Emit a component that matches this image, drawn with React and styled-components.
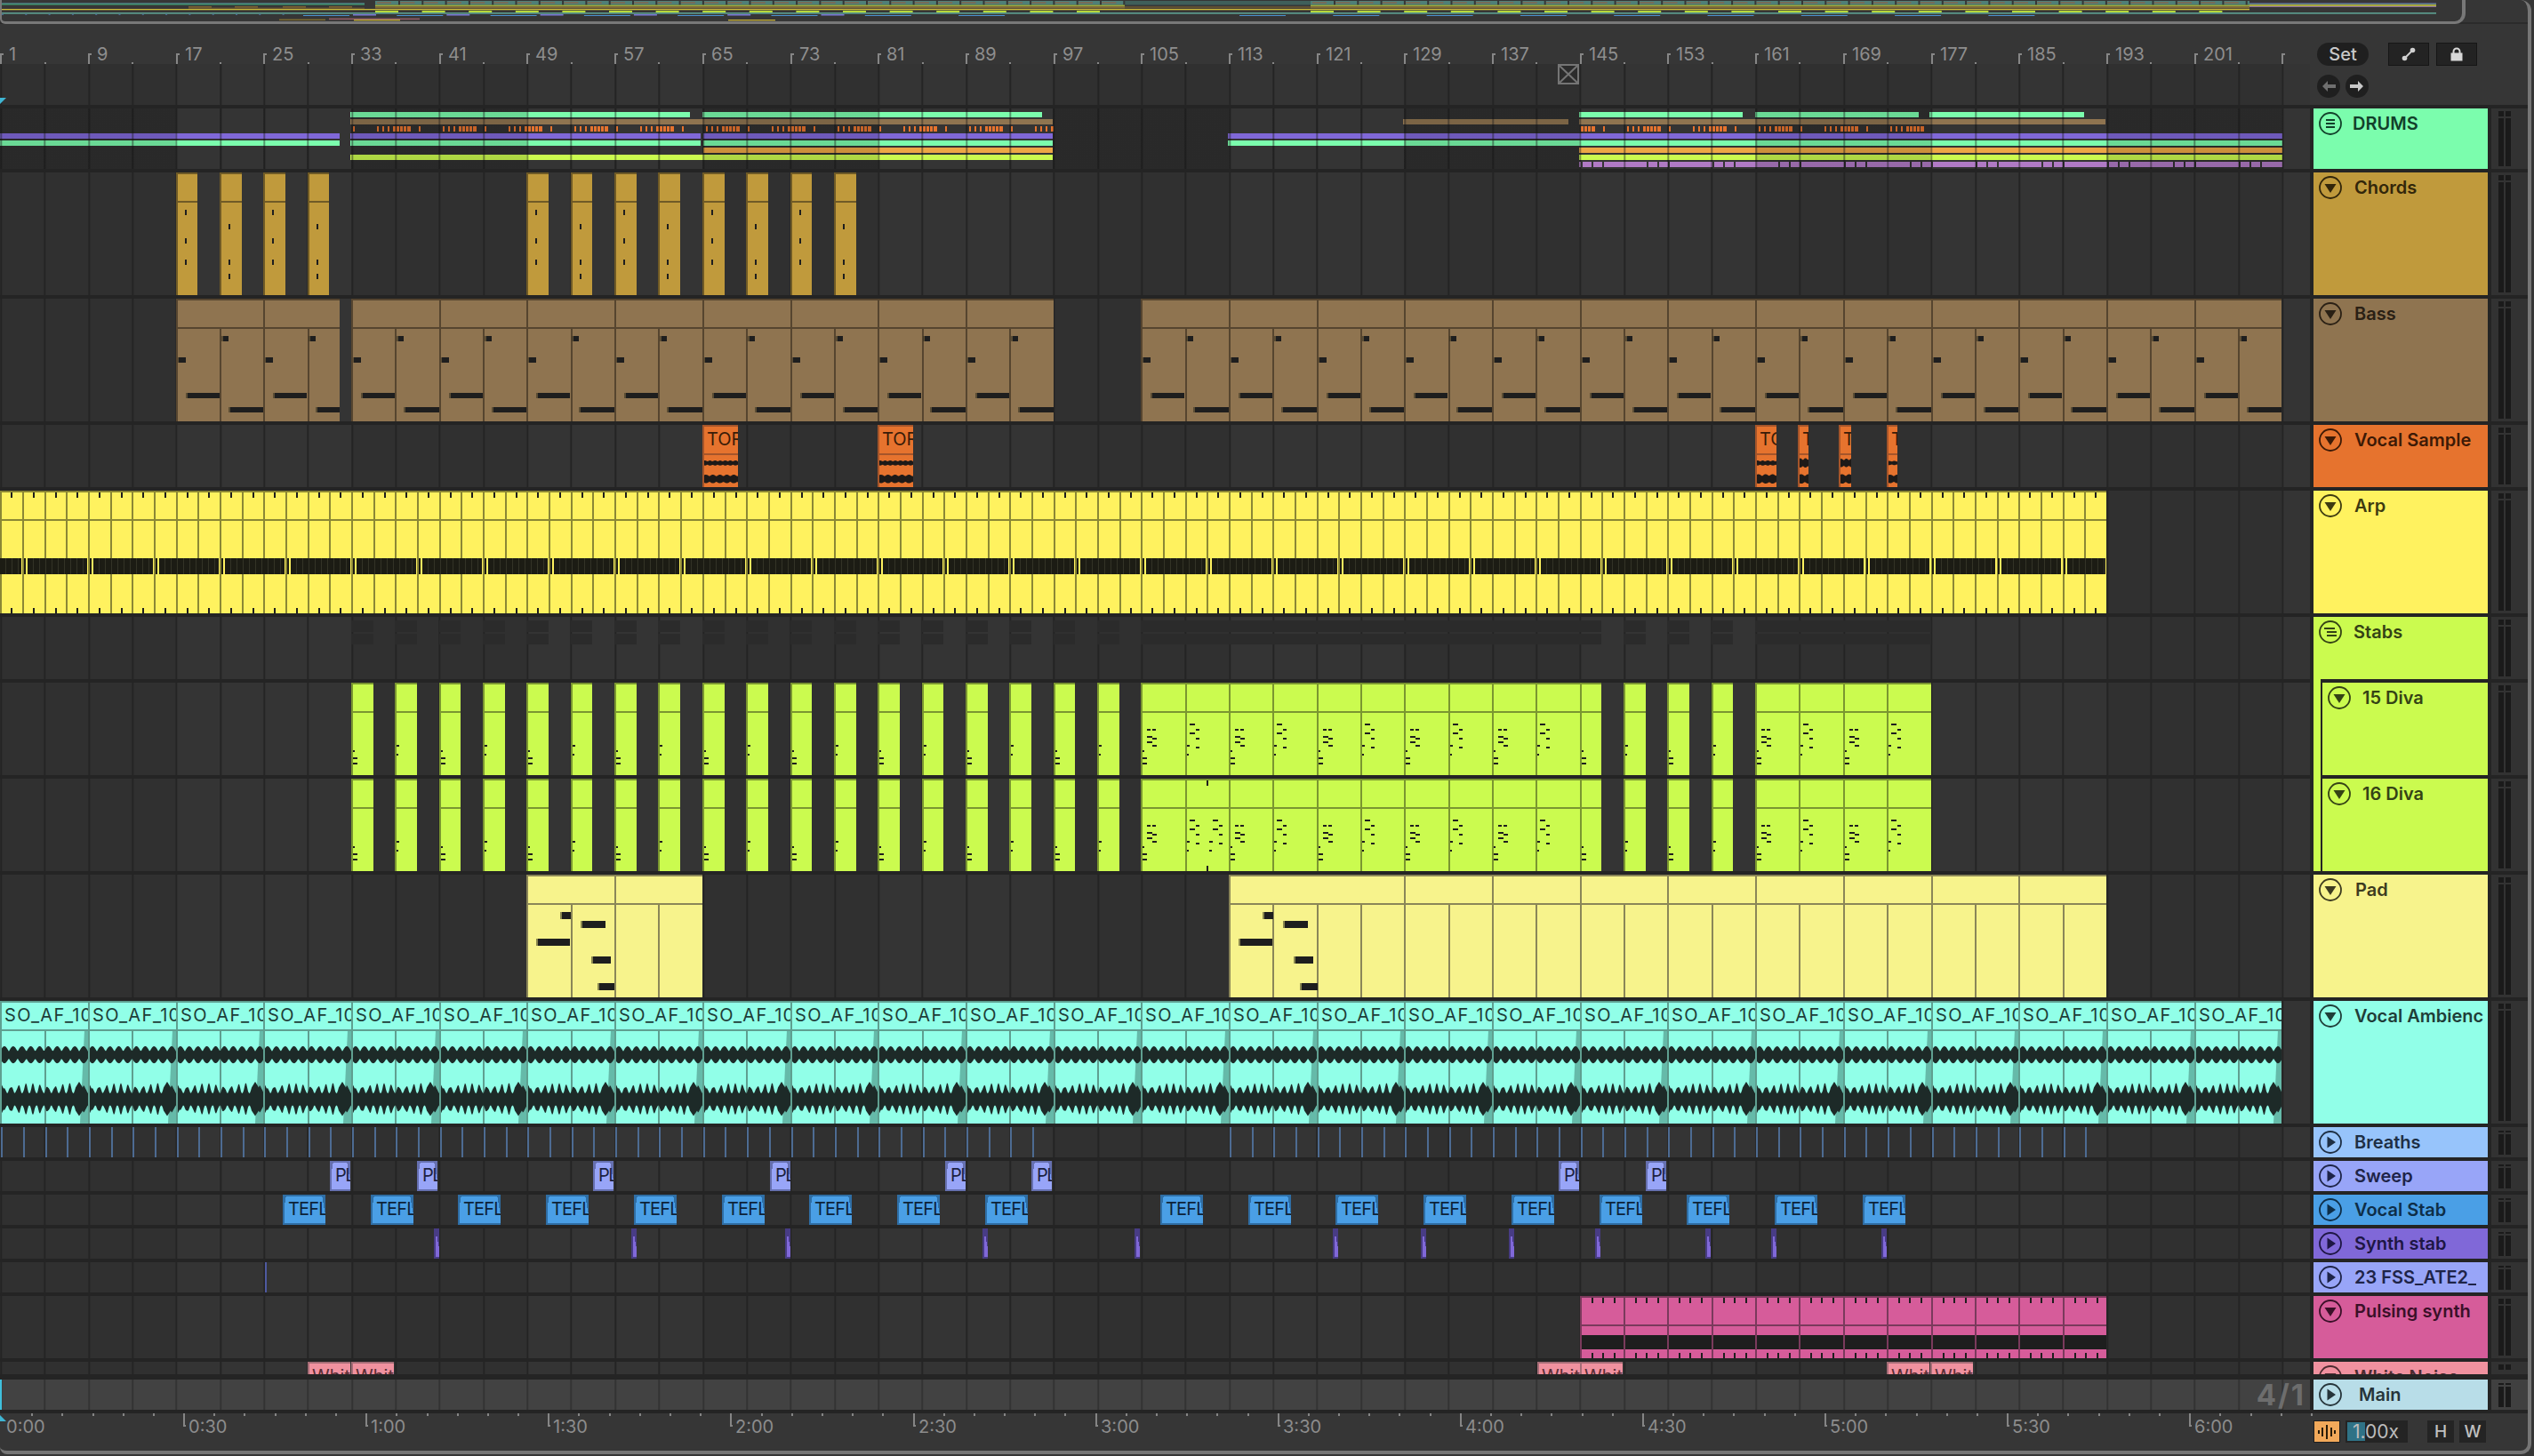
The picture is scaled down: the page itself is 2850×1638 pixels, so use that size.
import React from 'react';
import styled, { createGlobalStyle } from 'styled-components';

const STEP = 49.346;
const g = (i) => Math.round(0.3 + STEP * i);
const range = (from, to, by = 1) => {
  const out = [];
  for (let v = from; v < to - 0.001; v += by) out.push(v);
  return out;
};

const GlobalStyle = createGlobalStyle`
  html, body { margin: 0; padding: 0; background: #363636; overflow: hidden; }
  #root { width: 2850px; height: 1638px; overflow: hidden; }
  * { box-sizing: border-box; }
`;

const Frame = styled.div`
  width: 2847px;
  height: 1636px;
  display: flex;
  flex-direction: column;
  background: #363636;
  border-right: 4px solid #767676;
  border-bottom: 4px solid #767676;
  border-bottom-right-radius: 12px;
  border-bottom-left-radius: 8px;
  border-top-right-radius: 12px;
  font-family: Inter, 'Liberation Sans', sans-serif;
  overflow: hidden;
`;

/* overview */
const OverviewBar = styled.div`
  height: 27px;
  flex: none;
  border-bottom: 2px solid #2b2b2b;
`;
const OverviewBox = styled.div`
  width: 2773px;
  height: 27px;
  border: solid #787878;
  border-width: 0 4px 3px 2px;
  border-radius: 0 0 12px 6px;
  overflow: hidden;
`;

/* top */
const TopRow = styled.div`
  display: flex;
  height: 91px;
  flex: none;
`;
const TopLeft = styled.div`
  width: 2598px;
  flex: none;
  display: flex;
  flex-direction: column;
`;
const Ruler = styled.div`
  height: 45px;
  position: relative;
  flex: none;
`;
const BarTick = styled.div.attrs((p) => ({ style: { left: p.$x } }))`
  position: absolute;
  top: ${(p) => (p.$long ? 33 : 43)}px;
  height: ${(p) => (p.$long ? 12 : 2)}px;
  width: 2px;
  background: #868686;
  &::after {
    content: '';
    display: ${(p) => (p.$long ? 'block' : 'none')};
    width: 4px;
    height: 2px;
    background: #868686;
  }
`;
const BarLabel = styled.span.attrs((p) => ({ style: { left: p.$x } }))`
  position: absolute;
  top: 22px;
  font-size: 20px;
  line-height: 24px;
  color: #8e8e8e;
`;
const Controls = styled.div`
  flex: 1;
  padding: 21px 0 0 8px;
  display: flex;
  flex-direction: column;
  gap: 10px;
`;
const ControlRow = styled.div`
  display: flex;
  gap: ${(p) => p.$gap}px;
`;
const SetPill = styled.div`
  width: 58px;
  height: 26px;
  border-radius: 13px;
  background: #1f1f1f;
  color: #c8c8c8;
  font-size: 20px;
  font-weight: 500;
  line-height: 26px;
  text-align: center;
  margin-right: 14px;
`;
const SquareBtn = styled.div`
  width: 46px;
  height: 26px;
  background: #232323;
  border: 1px solid #161616;
  display: flex;
  align-items: center;
  justify-content: center;
`;
const RoundBtn = styled.div`
  width: 26px;
  height: 26px;
  border-radius: 50%;
  background: #1f1f1f;
  display: flex;
  align-items: center;
  justify-content: center;
`;

/* tracks */
const TrackList = styled.div`
  background: #242424;
  padding: 4px 0;
  display: flex;
  flex-direction: column;
  gap: 4px;
  flex: none;
`;
const TrackRow = styled.div`
  display: grid;
  grid-template-columns: 2598px 196px 41px;
  column-gap: 4px;
  height: ${(p) => p.$h}px;
  margin-top: ${(p) => p.$mt || 0}px;
`;
const gridLines = (line) => `repeating-linear-gradient(90deg, ${line} 0 2px, transparent 2px ${STEP}px)`;
const Lane = styled.div`
  position: relative;
  overflow: hidden;
  flex: ${(p) => (p.$fill ? 1 : 'none')};
  background-color: #343434;
  background-image: ${(p) =>
    p.$main
      ? `${gridLines('#333333')}, linear-gradient(#424242, #424242)`
      : `${gridLines('#242424')}, repeating-linear-gradient(90deg, #303030 0 ${STEP * 4}px, #343434 ${STEP * 4}px ${STEP * 8}px)`};
  background-position: 0.3px 0, 0 0;
  ${(p) =>
    p.$summary &&
    `
    &::after {
      content: '';
      position: absolute;
      inset: 0;
      pointer-events: none;
      background-image: ${gridLines('rgba(30,30,30,.45)')}, repeating-linear-gradient(90deg, rgba(0,0,0,.14) 0 ${STEP * 4}px, transparent ${STEP * 4}px ${STEP * 8}px);
      background-position: 0.3px 0, 0 0;
    }
  `}
`;
const Panel = styled.div`
  position: relative;
  display: flex;
  align-items: flex-start;
  background: ${(p) => p.$color};
  color: ${(p) => p.$ink};
  padding: 4px 0 0 6px;
  overflow: ${(p) => (p.$nested ? 'visible' : 'hidden')};
  ${(p) =>
    p.$nested &&
    `
    margin-left: 8px;
    border-left: 2px solid #242424;
    &::before {
      content: '';
      position: absolute;
      left: -10px;
      top: -4px;
      bottom: 0;
      width: 8px;
      background: ${p.$color};
    }
  `}
`;
const IconSvg = styled.svg`
  width: 26px;
  height: 26px;
  flex: none;
`;
const PanelLabel = styled.span`
  margin-left: ${(p) => p.$ml}px;
  font-size: 20px;
  font-weight: 600;
  line-height: 26px;
  white-space: nowrap;
  overflow: hidden;
`;
const Meter = styled.div`
  background: ${(p) => (p.$main ? '#404040' : '#323232')};
  padding: ${(p) => (p.$small ? 4 : 3)}px 0 3px 8px;
  display: flex;
  gap: 2px;
  overflow: hidden;
`;
const MeterBar = styled.div`
  width: 6px;
  height: 100%;
  display: flex;
  flex-direction: column;
  gap: 2px;
  &::before {
    content: '';
    height: ${(p) => (p.$small ? 2 : 6)}px;
    flex: none;
    background: #1a1a1a;
  }
  &::after {
    content: '';
    flex: 1;
    background: #1a1a1a;
  }
`;

/* clips */
const Clip = styled.div.attrs((p) => ({ style: { left: p.$x, width: p.$w } }))`
  position: absolute;
  top: 0;
  bottom: 0;
  overflow: hidden;
  background: ${(p) => p.$color};
  &::after {
    content: '';
    position: absolute;
    left: 0;
    top: 0;
    bottom: 0;
    width: 2px;
    background: ${(p) => p.$edge};
  }
`;
const ClipHead = styled.div`
  height: 34px;
  border-top: 2px solid ${(p) => p.$edge};
  border-bottom: 2px solid ${(p) => p.$edge};
  padding-left: ${(p) => p.$pad || 5}px;
  font-size: 20px;
  line-height: 29px;
  letter-spacing: ${(p) => p.$track || 0}px;
  white-space: nowrap;
  color: ${(p) => p.$ink || '#1c1c1c'};
`;
const FadedClip = styled(Clip)`
  background-image:
    linear-gradient(100deg, ${(p) => p.$edge} 4px, transparent 4px),
    linear-gradient(260deg, ${(p) => p.$edge} 4px, transparent 4px);
`;
const BodyLine = styled.div.attrs((p) => ({ style: { left: p.$x } }))`
  position: absolute;
  top: 34px;
  bottom: 0;
  width: 2px;
  background: ${(p) => p.$color};
`;
const Note = styled.div.attrs((p) => ({
  style: { left: p.$x, top: p.$y, width: p.$w, height: p.$h },
}))`
  position: absolute;
  background: #1e1e1e;
`;
const EdgedNote = styled(Note)`
  border-left: 2px solid rgba(50, 45, 30, 0.55);
  background-clip: padding-box;
`;
const Strip = styled.div.attrs((p) => ({
  style: { left: p.$x, top: p.$y, width: p.$w, height: p.$h || 6 },
}))`
  position: absolute;
  background: ${(p) => p.$color};
`;
const ArpBar = styled(Strip)`
  background-image: repeating-linear-gradient(90deg, transparent 0 6px, rgba(255, 255, 200, 0.1) 6px 7px);
`;
const FadeEnd = styled.div`
  position: absolute;
  top: 34px;
  bottom: 0;
  right: 0;
  width: 9px;
  background: rgba(40, 90, 80, 0.42);
  clip-path: polygon(55% 0, 100% 0, 100% 100%, 0 100%);
`;
const WaveSvg = styled.svg`
  position: absolute;
  left: 0;
  top: 0;
  pointer-events: none;
`;
const Marker = styled.div`
  position: absolute;
  left: 0;
  top: ${(p) => p.$top}px;
  width: 0;
  height: 7px;
  ${(p) =>
    p.$down
      ? 'border-top: 7px solid #3fb6d4; border-right: 7px solid transparent;'
      : 'border-bottom: 7px solid #3fb6d4; border-right: 7px solid transparent;'}
`;
const PlayBar = styled.div`
  position: absolute;
  left: 0;
  top: 0;
  bottom: 0;
  width: 2px;
  background: #3fc0dc;
`;
const Signature = styled.span`
  position: absolute;
  right: 5px;
  top: 0;
  font-size: 33px;
  font-weight: 700;
  letter-spacing: 2px;
  line-height: 34px;
  color: #6d6d6d;
`;
const LocatorBox = styled.svg`
  position: absolute;
  left: 1752px;
  top: 0;
`;

/* bottom */
const BottomRow = styled.div`
  display: flex;
  height: 42px;
  flex: none;
`;
const Timeline = styled.div`
  width: 2602px;
  flex: none;
  position: relative;
`;
const TimeTick = styled.div.attrs((p) => ({ style: { left: p.$x } }))`
  position: absolute;
  top: 0;
  width: 2px;
  height: ${(p) => (p.$major ? 15 : 3)}px;
  background: #858585;
  &::after {
    content: '';
    display: ${(p) => (p.$major ? 'block' : 'none')};
    position: absolute;
    left: 0;
    bottom: 0;
    width: 3px;
    height: 2px;
    background: #858585;
  }
`;
const TimeLabel = styled.span.attrs((p) => ({ style: { left: p.$x } }))`
  position: absolute;
  top: 3px;
  font-size: 20px;
  line-height: 24px;
  color: #8c8c8c;
`;
const Footer = styled.div`
  flex: 1;
  display: flex;
  align-items: flex-start;
  padding-top: 8px;
`;
const OrangeBtn = styled.div`
  width: 30px;
  height: 25px;
  background: #f2a95a;
  border: 1px solid #1e1e1e;
  display: flex;
  align-items: center;
  justify-content: center;
  margin-right: 6px;
`;
const SpeedBox = styled.div`
  position: relative;
  width: 70px;
  height: 25px;
  background: #242424;
  color: #bcbcbc;
  font-size: 21px;
  line-height: 25px;
  padding-left: 8px;
  margin-right: 22px;
  overflow: hidden;
  &::before {
    content: '';
    position: absolute;
    left: 2px;
    top: 2px;
    bottom: 2px;
    width: 20px;
    background: #2f7286;
  }
`;
const SpeedText = styled.span`
  position: relative;
`;
const KeyBtn = styled.div`
  width: 30px;
  height: 25px;
  background: #242424;
  color: #c0c0c0;
  font-size: 19px;
  font-weight: 500;
  line-height: 25px;
  text-align: center;
  margin-right: 6px;
`;

/* drawings */
function TrackIcon({ kind }) {
  return (
    <IconSvg viewBox="0 0 26 26" fill="currentColor">
      <circle cx="13" cy="13" r="12" fill="none" stroke="currentColor" strokeWidth="1.8" />
      {kind === 'down' && <polygon points="6.5,9 19.5,9 13,19" />}
      {kind === 'right' && <polygon points="9.5,6.5 9.5,19.5 19,13" />}
      {kind === 'group' && (
        <g stroke="currentColor" strokeWidth="2">
          <line x1="8" x2="18" y1="9" y2="9" />
          <line x1="8" x2="18" y1="13" y2="13" />
          <line x1="8" x2="18" y1="17" y2="17" />
        </g>
      )}
      {kind === 'stagger' && (
        <g stroke="currentColor" strokeWidth="2">
          <line x1="6" x2="18" y1="9" y2="9" />
          <line x1="9" x2="20" y1="13" y2="13" />
          <line x1="9" x2="20" y1="17" y2="17" />
        </g>
      )}
    </IconSvg>
  );
}

function envelopePath(w, cy, env) {
  const up = [];
  const down = [];
  for (let t = 0; t <= w; t += 1) {
    const a = env(t);
    up.push(`${t},${(cy - a).toFixed(1)}`);
    down.unshift(`${t},${(cy + a * 0.92).toFixed(1)}`);
  }
  return `M${up.join('L')}L${down.join('L')}Z`;
}

const AMBIENT_W = 99;
const ambientPath =
  envelopePath(AMBIENT_W, 61, (t) => 4 + 6 * Math.abs(Math.sin((Math.PI * t * 10) / AMBIENT_W))) +
  envelopePath(AMBIENT_W, 111, (t) => {
    const wob = Math.abs(Math.sin((Math.PI * t * 12) / AMBIENT_W));
    const base = 7 + 12 * wob * wob * (0.78 + 0.22 * Math.sin(t * 0.9));
    if (t < 5) return 21 - t * 2.2;
    if (t > 84 && t < 94) return 20 - Math.abs(t - 89) * 1.6;
    return base;
  });

function AmbientWave() {
  return (
    <WaveSvg width={AMBIENT_W} height="138">
      <path d={ambientPath} fill="#1d2a28" />
    </WaveSvg>
  );
}

function SampleWave({ w, top, bottom }) {
  const d =
    envelopePath(w, 43, (t) => top * (0.6 + 0.4 * Math.abs(Math.sin(t * 0.55)))) +
    envelopePath(w, 61, (t) => bottom * (0.62 + 0.38 * Math.abs(Math.sin(t * 0.4))));
  return (
    <WaveSvg width={w} height="70">
      <path d={d} fill="#1e1a18" />
    </WaveSvg>
  );
}

const c = {
  chords: ['#c09a3c', '#6f5a26'],
  bass: ['#8f7450', '#56452f'],
  vocal: ['#e6732e', '#a5552a'],
  arp: ['#fff25f', '#8b8735'],
  diva: ['#cbfb4f', '#7a9630'],
  pad: ['#f7f38c', '#8a8658'],
  amb: ['#91ffe8', '#5f9f90'],
  sweep: ['#98a5f8', '#6670b0'],
  stab: ['#4a9fe6', '#2f6ea5'],
  synth: ['#8068d8', '#483c85'],
  pulse: ['#d65c9a', '#7a3a5c'],
  white: ['#f0919f', '#a56d77'],
};

/* lanes */
function MidiClip({ from, to, color, beats, children, name, ink, track }) {
  const x = g(from);
  const w = g(to) - x;
  return (
    <Clip $x={x} $w={w} $color={color[0]} $edge={color[1]}>
      <ClipHead $edge={color[1]} $ink={ink} $track={track}>
        {name}
      </ClipHead>
      {(beats || []).map((b) => (
        <BodyLine key={b} $x={g(from + b) - x} $color={color[1]} />
      ))}
      {children}
    </Clip>
  );
}

const STRIP_ROWS = { orange: 20, violet: 60 };

function DrumsLane() {
  const spans = [
    ['#7bfdad', 4, 394, 382],
    ['#7bfdad', 4, 790, 382],
    ['#7bfdad', 4, 1776, 184],
    ['#7bfdad', 4, 1974, 184],
    ['#7bfdad', 4, 2170, 174],
    ['#8f7450', 12, 394, 790],
    ['#8f7450', 12, 1578, 186],
    ['#8f7450', 12, 1776, 592],
    ['#8068d8', 28, 0, 382],
    ['#8068d8', 28, 394, 394],
    ['#8068d8', 28, 791, 393],
    ['#8068d8', 28, 1381, 1186],
    ['#7bfdad', 36, 0, 382],
    ['#7bfdad', 36, 394, 394],
    ['#7bfdad', 36, 791, 393],
    ['#7bfdad', 36, 1381, 1186],
    ['#eda746', 44, 791, 393],
    ['#eda746', 44, 1776, 791],
    ['#cbfb4f', 52, 394, 790],
    ['#cbfb4f', 52, 1776, 791],
  ];
  const ticks = [];
  const pieces = [
    [0, 2],
    [6, 2],
    [12, 2],
    [18, 3],
    [22, 3],
    [26, 3],
    [30, 3],
    [34, 4],
    [47, 2],
  ];
  for (let k = -1; k < 24; k += 1) {
    pieces.forEach(([o, w]) => {
      const x = 424 + 74 * k + o;
      const inA = x >= 394 && x < 1184;
      const inB = x >= 1776 && x < 2165;
      if (inA || inB) ticks.push([x, w]);
    });
  }
  const violet = [
    [1776, 2],
    [1780, 10],
    [1792, 10],
  ];
  for (let k = 0; k < 11; k += 1) {
    const base = 1804 + 74 * k;
    violet.push([base, Math.min(48, 2567 - base)]);
    if (base + 50 < 2567) violet.push([base + 50, 10]);
    if (base + 62 < 2567) violet.push([base + 62, 10]);
  }
  return (
    <Lane $summary>
      {spans.map(([color, y, x, w]) => (
        <Strip key={`${y}-${x}`} $color={color} $x={x} $y={y} $w={w} />
      ))}
      {ticks.map(([x, w]) => (
        <Strip key={x} $color="#e6732e" $x={x} $y={STRIP_ROWS.orange} $w={w} />
      ))}
      {violet.map(([x, w]) => (
        <Strip key={x} $color="#b07ac5" $x={x} $y={STRIP_ROWS.violet} $w={w} />
      ))}
    </Lane>
  );
}

function ChordsLane() {
  const rows = [
    [42, 74, 98],
    [58, 98, 114],
  ];
  const idx = [4, 5, 6, 7, ...range(12, 20)];
  return (
    <Lane>
      {idx.map((i) => (
        <MidiClip key={i} from={i} to={i + 0.5} color={c.chords}>
          {rows[i % 2].map((y) => (
            <Note key={y} $x={10} $y={y} $w={2} $h={6} />
          ))}
        </MidiClip>
      ))}
    </Lane>
  );
}

function BassLane() {
  const notes = [
    [51, 42, 8],
    [1, 66, 10],
    [11, 106, 38],
    [59, 122, 40],
  ];
  const clips = [[4, 6], [6, 7.74]];
  range(8, 24, 2).forEach((i) => clips.push([i, i + 2]));
  range(26, 52, 2).forEach((i) => clips.push([i, i + 2]));
  return (
    <Lane>
      {clips.map(([a, b]) => (
        <MidiClip key={a} from={a} to={b} color={c.bass} beats={[1]}>
          {notes.map(([x, y, w]) => (
            <EdgedNote key={y} $x={x} $y={y} $w={w} $h={6} />
          ))}
        </MidiClip>
      ))}
    </Lane>
  );
}

function VocalLane() {
  const clips = [
    [790, 40, 3, 5],
    [987, 40, 3, 5],
    [1974, 24, 3, 5.5],
    [2022, 12, 5.5, 5.5],
    [2068, 14, 5, 5.5],
    [2122, 12, 2.5, 5],
  ];
  return (
    <Lane>
      {clips.map(([x, w, top, bottom]) => (
        <Clip key={x} $x={x} $w={w} $color={c.vocal[0]} $edge={c.vocal[1]}>
          <ClipHead $edge={c.vocal[1]} $ink="#3a1c08">
            TOR
          </ClipHead>
          <SampleWave w={w} top={top} bottom={bottom} />
        </Clip>
      ))}
    </Lane>
  );
}

function ArpLane() {
  const bars = [[0, 24]];
  for (let k = 0; k < 32; k += 1) {
    const start = 30.5 + 74.02 * k;
    const smallX = Math.round(start - 4);
    if (smallX < 2368) bars.push([smallX, 2]);
    if (start < 2368) bars.push([Math.round(start), Math.min(67, 2368 - Math.round(start))]);
  }
  return (
    <Lane>
      {range(0, 48, 0.5).map((i) => (
        <MidiClip key={i} from={i} to={i + 0.5} color={c.arp}>
          <Note $x={12} $y={2} $w={2} $h={6} />
          <Note $x={12} $y={132} $w={2} $h={6} />
        </MidiClip>
      ))}
      {bars.map(([x, w]) => (
        <ArpBar key={x} $color="#1c1c14" $x={x} $y={76} $w={w} $h={18} />
      ))}
    </Lane>
  );
}

const divaSmall = range(8, 26);
const divaBig = [...range(26, 37), ...range(40, 44)];
const divaSolo = [37, 38, 39];

function StabsLane() {
  const spans = [
    ...divaSmall.map((i) => [g(i), g(i + 0.5) - g(i)]),
    [g(26), g(36.5) - g(26)],
    ...divaSolo.map((i) => [g(i), g(i + 0.5) - g(i)]),
    [g(40), g(44) - g(40)],
  ];
  return (
    <Lane>
      {spans.map(([x, w]) => (
        <React.Fragment key={x}>
          <Strip $color="#2b2b2b" $x={x} $y={4} $w={w} $h={13} />
          <Strip $color="#2b2b2b" $x={x} $y={19} $w={w} $h={12} />
        </React.Fragment>
      ))}
    </Lane>
  );
}

const DIVA_A = [
  [7, 3.5, 52],
  [12.5, 4, 52],
  [7, 6, 60],
  [12.5, 5.5, 62],
  [7, 6, 66],
  [12.5, 5.5, 70],
];
const DIVA_A_LOW = [
  [0.5, 3.5, 76],
  [0.5, 6, 84],
  [0.5, 6, 90],
];
const DIVA_B = [
  [4.5, 6, 46],
  [11.5, 4.5, 52],
  [4.5, 6, 56],
  [12, 4, 62],
  [12, 4, 72],
];
const DIVA_B_LOW = [
  [0.5, 4, 70],
  [0.5, 3.5, 80],
];

function DivaNotes({ notes, dx = 0 }) {
  return notes.map(([x, w, y]) => (
    <Note key={`${x}-${y}-${dx}`} $x={x + dx} $y={y} $w={w} $h={2} />
  ));
}

function DivaLane({ second }) {
  const clip = (i, to, full) => {
    const even = i % 2 === 0;
    const low = even ? DIVA_A_LOW : DIVA_B_LOW;
    return (
      <MidiClip key={i} from={i} to={to} color={c.diva}>
        <DivaNotes notes={low} />
        {full && <DivaNotes notes={even ? DIVA_A : DIVA_B} />}
        {second && i === 27 && (
          <>
            <DivaNotes notes={DIVA_B} dx={26} />
            <DivaNotes notes={DIVA_B_LOW} dx={26} />
            <Note $x={24} $y={2} $w={2} $h={6} />
            <Note $x={24} $y={98} $w={2} $h={6} />
          </>
        )}
      </MidiClip>
    );
  };
  return (
    <Lane>
      {divaSmall.map((i) => clip(i, i + 0.5, false))}
      {divaBig.map((i) => clip(i, i === 36 ? 36.5 : i + 1, i !== 36))}
      {divaSolo.map((i) => clip(i, i + 0.5, false))}
    </Lane>
  );
}

function PadLane() {
  const clips = [
    [12, 14, true, [1]],
    [14, 16, false, [1]],
    [28, 32, true, [1, 2, 3]],
    ...range(32, 48, 2).map((i) => [i, i + 2, false, [1]]),
  ];
  const notes = [
    [37.5, 42, 12],
    [61, 52, 28],
    [11, 72, 38],
    [73, 92, 22],
    [79.5, 122, 20],
  ];
  return (
    <Lane>
      {clips.map(([a, b, withNotes, beats]) => (
        <MidiClip key={a} from={a} to={b} color={c.pad} beats={beats}>
          {withNotes &&
            notes.map(([x, y, w]) => <EdgedNote key={y} $x={x} $y={y} $w={w} $h={8} />)}
        </MidiClip>
      ))}
    </Lane>
  );
}

function AmbientLane() {
  return (
    <Lane>
      {range(0, 52, 2).map((i) => (
        <MidiClip key={i} from={i} to={i + 2} color={c.amb} beats={[1]} name="SO_AF_10" ink="#1d3d38" track={1.3}>
          <FadeEnd />
          <AmbientWave />
        </MidiClip>
      ))}
    </Lane>
  );
}

function BreathsLane() {
  const ticks = range(0, 48, 0.5).filter((i) => i <= 23.5 || i >= 28);
  return (
    <Lane>
      {ticks.map((i) => (
        <Strip key={i} $color="#4d6b92" $x={g(i + 0.02)} $y={0} $w={2} $h={34} />
      ))}
    </Lane>
  );
}

function ShortClips({ items, w, color, name, pad, ink, track }) {
  return (
    <Lane>
      {items.map((x) => (
        <FadedClip key={x} $x={x} $w={w} $color={color[0]} $edge={color[1]}>
          <ClipHead $edge={color[1]} $pad={pad} $ink={ink} $track={track}>
            {name}
          </ClipHead>
        </FadedClip>
      ))}
    </Lane>
  );
}

function PulsingLane() {
  return (
    <Lane>
      {range(36, 48).map((i) => (
        <MidiClip key={i} from={i} to={i + 1} color={c.pulse}>
          {[13, 25, 38].map((x) => (
            <React.Fragment key={x}>
              <Note $x={x} $y={2} $w={2} $h={6} />
              <Note $x={x} $y={64} $w={2} $h={6} />
            </React.Fragment>
          ))}
          <Note $x={2} $y={44} $w={98} $h={16} />
        </MidiClip>
      ))}
    </Lane>
  );
}

function WhiteLane() {
  return (
    <Lane>
      {[346, 395, 1729, 1777, 2122, 2171].map((x) => (
        <MidiClip key={x} from={(x - 0.3) / STEP} to={(x + 47.5) / STEP} color={c.white} name="White Noise" ink="#5a2c34" />
      ))}
    </Lane>
  );
}

/* overview drawing */
function Overview() {
  const rects = [];
  const add = (x, y, w, h, fill) => rects.push({ x, y, w, h, fill });
  add(0, 3.5, 408, 1, '#5f9db0');
  add(0, 4.5, 408, 1, '#3fae78');
  [210, 262, 316, 368].forEach((x) => add(x, 7, 26, 2, '#7a6233'));
  add(210, 8.5, 198, 1.5, '#5f5032');
  add(0, 10, 2528, 1.3, '#cdbb3a');
  add(0, 14, 2738, 1.7, '#5b9a8c');
  range(0, 13).forEach((k) => add(26.3 * k, 15.7, 2, 1.3, '#4a6a90'));
  range(0, 8).forEach((k) => add(339 + 105.3 * k, 17, 52, 1, '#4a90d0'));
  range(0, 9).forEach((k) => add(1392 + 105.3 * k, 17, 52, 1, '#4a90d0'));
  range(0, 6).forEach((k) => add(395 + 105.3 * k, 16, 26, 1.5, '#7a78d8'));
  add(368, 20.5, 102, 1.7, '#8c5a64');
  add(312, 21.5, 52, 1.5, '#7d6a30');
  add(396, 22, 52, 1.3, '#c8b23a');
  add(817, 22, 53, 1.3, '#c8b23a');
  add(420, 1, 843, 4.5, '#4f7f77');
  add(1263, 1, 209, 4.5, '#3f5f5a');
  add(1472, 1, 1056, 4.5, '#4f7f77');
  range(0, 32).forEach((k) => {
    const x = 422 + 26.3 * k;
    add(x, 2.5, 16, 1, '#a05a3a');
    add(x + 24, 1, 2, 9, '#363636');
  });
  range(0, 40).forEach((k) => {
    const x = 1474 + 26.3 * k;
    add(x, 2.5, 16, 1, '#a05a3a');
    add(x + 24, 1, 2, 9, '#363636');
  });
  add(420, 5.7, 843, 1, '#c8e040');
  add(1472, 5.7, 1056, 1, '#c8e040');
  add(420, 7, 843, 2.5, '#7f6a38');
  add(1263, 7, 209, 2.5, '#5f5032');
  add(1472, 7, 1056, 2.5, '#7f6a38');
  range(0, 16).forEach((k) => add(420 + 52.6 * k, 12, 26, 2, '#b8d83c'));
  range(0, 20).forEach((k) => add(1472 + 52.6 * k, 12, 26, 2, '#b8d83c'));
  [
    [3.5, '#7a68c8'],
    [4.4, '#58c090'],
    [5.3, '#d89a44'],
    [6.2, '#b8d83c'],
    [7.1, '#9c70b0'],
  ].forEach(([y, fill]) => add(2528, y, 210, 0.9, fill));
  return (
    <OverviewBox>
      <svg width="2767" height="24">
        {rects.map((r, i) => (
          <rect key={i} x={r.x} y={r.y} width={r.w} height={r.h} fill={r.fill} />
        ))}
      </svg>
    </OverviewBox>
  );
}

const vocalStabs = [...range(0, 9).map((k) => Math.round(318 + 98.7 * k)), ...range(0, 9).map((k) => Math.round(1305 + 98.7 * k))];

const tracks = [
  { name: 'DRUMS', color: '#7bfdad', ink: '#12402a', h: 68, icon: 'group', ml: 12, lane: <DrumsLane /> },
  { name: 'Chords', color: '#c09a3c', ink: '#32260a', h: 138, icon: 'down', ml: 14, lane: <ChordsLane /> },
  { name: 'Bass', color: '#8f7450', ink: '#2a2014', h: 138, icon: 'down', ml: 14, lane: <BassLane /> },
  { name: 'Vocal Sample', color: '#e6732e', ink: '#3d1a06', h: 70, icon: 'down', ml: 14, lane: <VocalLane /> },
  { name: 'Arp', color: '#fff25f', ink: '#3d3a10', h: 138, icon: 'down', ml: 14, lane: <ArpLane /> },
  { name: 'Stabs', color: '#cbfb4f', ink: '#344215', h: 70, icon: 'stagger', ml: 13, lane: <StabsLane /> },
  { name: '15 Diva', color: '#cbfb4f', ink: '#344215', h: 104, icon: 'down', ml: 13, nested: true, lane: <DivaLane /> },
  { name: '16 Diva', color: '#cbfb4f', ink: '#344215', h: 104, icon: 'down', ml: 13, nested: true, lane: <DivaLane second /> },
  { name: 'Pad', color: '#f7f38c', ink: '#3d3b20', h: 138, icon: 'down', ml: 15, lane: <PadLane /> },
  { name: 'Vocal Ambienc', color: '#91ffe8', ink: '#1f3d38', h: 138, icon: 'down', ml: 14, lane: <AmbientLane /> },
  { name: 'Breaths', color: '#97c4fb', ink: '#1e2f44', h: 34, icon: 'right', ml: 14, lane: <BreathsLane /> },
  {
    name: 'Sweep',
    color: '#98a5f8',
    ink: '#1e2448',
    h: 34,
    icon: 'right',
    ml: 14,
    lane: <ShortClips items={[371, 469, 667, 866, 1063, 1160, 1753, 1851]} w={23} color={c.sweep} name="PL" pad={6} track={-1.5} ink="#1c2140" />,
  },
  {
    name: 'Vocal Stab',
    color: '#4a9fe6',
    ink: '#0e2e48',
    h: 34,
    icon: 'right',
    ml: 14,
    lane: <ShortClips items={vocalStabs} w={48} color={c.stab} name="TEFL" pad={6} track={-0.8} ink="#0d2338" />,
  },
  {
    name: 'Synth stab',
    color: '#8068d8',
    ink: '#1e1644',
    h: 34,
    icon: 'right',
    ml: 14,
    lane: <ShortClips items={[488, 710, 883, 1105, 1276, 1499, 1598, 1697, 1794, 1918, 1992, 2116]} w={6} color={c.synth} />,
  },
  {
    name: '23 FSS_ATE2_',
    color: '#98a5f8',
    ink: '#1e2448',
    h: 34,
    icon: 'right',
    ml: 14,
    lane: <ShortClips items={[298]} w={2} color={['#4e5aa0', '#4e5aa0']} />,
  },
  { name: 'Pulsing synth', color: '#d65c9a', ink: '#3a1028', h: 70, icon: 'down', ml: 14, lane: <PulsingLane /> },
  { name: 'White Noise', color: '#f0919f', ink: '#4d2a30', h: 14, icon: 'down', ml: 14, lane: <WhiteLane /> },
];

function TrackPanel({ track }) {
  return (
    <Panel $color={track.color} $ink={track.ink} $nested={track.nested}>
      <TrackIcon kind={track.icon} />
      <PanelLabel $ml={track.ml}>{track.name}</PanelLabel>
    </Panel>
  );
}

function MeterColumn({ small, main }) {
  return (
    <Meter $small={small} $main={main}>
      <MeterBar $small={small} />
      <MeterBar $small={small} />
    </Meter>
  );
}

export default function App() {
  const ruler = range(0, 53);
  const minor = range(0, 77);
  return (
    <>
      <GlobalStyle />
      <Frame>
        <OverviewBar>
          <Overview />
        </OverviewBar>
        <TopRow>
          <TopLeft>
            <Ruler>
              {ruler.map((i) => (
                <React.Fragment key={i}>
                  <BarTick $x={g(i)} $long={i % 2 === 0} />
                  {i % 2 === 0 && i < 52 && <BarLabel $x={g(i) + 10}>{1 + 4 * i}</BarLabel>}
                </React.Fragment>
              ))}
            </Ruler>
            <Lane $fill>
              <Marker $top={38} $down />
              <LocatorBox width="24" height="23" viewBox="0 0 24 23">
                <rect x="1" y="1" width="22" height="21" fill="#2c2c2c" stroke="#757575" strokeWidth="2" />
                <path d="M2 2L22 21M22 2L2 21" stroke="#757575" strokeWidth="2" />
              </LocatorBox>
            </Lane>
          </TopLeft>
          <Controls>
            <ControlRow $gap={8}>
              <SetPill>Set</SetPill>
              <SquareBtn>
                <svg width="16" height="16" viewBox="0 0 16 16">
                  <line x1="3.5" y1="12.5" x2="12.5" y2="3.5" stroke="#d0d0d0" strokeWidth="2" />
                  <circle cx="3.5" cy="12.5" r="2.8" fill="#d0d0d0" />
                  <circle cx="12.5" cy="3.5" r="2.8" fill="#d0d0d0" />
                </svg>
              </SquareBtn>
              <SquareBtn>
                <svg width="16" height="16" viewBox="0 0 16 16">
                  <path d="M4.5 7V5a3.5 3.5 0 0 1 7 0v2" fill="none" stroke="#d8d8d8" strokeWidth="2" />
                  <rect x="1.5" y="6.5" width="13" height="9" fill="#d8d8d8" />
                </svg>
              </SquareBtn>
            </ControlRow>
            <ControlRow $gap={6}>
              <RoundBtn>
                <svg width="18" height="16" viewBox="0 0 18 16">
                  <path d="M8 2L2 8l6 6V10h9V6H8z" fill="#6f6f6f" />
                </svg>
              </RoundBtn>
              <RoundBtn>
                <svg width="18" height="16" viewBox="0 0 18 16">
                  <path d="M10 2l6 6-6 6V10H1V6h9z" fill="#c8c8c8" />
                </svg>
              </RoundBtn>
            </ControlRow>
          </Controls>
        </TopRow>
        <TrackList>
          {tracks.map((t) => (
            <TrackRow key={t.name} $h={t.h}>
              {t.lane}
              <TrackPanel track={t} />
              <MeterColumn small={t.h === 34} />
            </TrackRow>
          ))}
          <TrackRow $h={34} $mt={2}>
            <Lane $main>
              <PlayBar />
              <Signature>4/1</Signature>
            </Lane>
            <Panel $color="#b8dde8" $ink="#26343a">
              <TrackIcon kind="right" />
              <PanelLabel $ml={19}>Main</PanelLabel>
            </Panel>
            <MeterColumn small main />
          </TrackRow>
        </TrackList>
        <BottomRow>
          <Timeline>
            <Marker $top={2} />
            {minor.map((k) => (
              <React.Fragment key={k}>
                {k > 0 && <TimeTick $x={Math.round(1 + (205.1 / 6) * k)} $major={k % 6 === 0} />}
                {k % 6 === 0 && (
                  <TimeLabel $x={Math.round(1 + (205.1 / 6) * k) + 6}>
                    {Math.floor(k / 12)}:{k % 12 === 0 ? '00' : '30'}
                  </TimeLabel>
                )}
              </React.Fragment>
            ))}
          </Timeline>
          <Footer>
            <OrangeBtn>
              <svg width="22" height="18" viewBox="0 0 22 18" stroke="#2a1c08" strokeWidth="2">
                <line x1="2" x2="2" y1="7" y2="11" />
                <line x1="6" x2="6" y1="4" y2="14" />
                <line x1="11" x2="11" y1="1" y2="17" />
                <line x1="16" x2="16" y1="4" y2="14" />
                <line x1="20" x2="20" y1="7" y2="11" />
              </svg>
            </OrangeBtn>
            <SpeedBox>
              <SpeedText>1.00x</SpeedText>
            </SpeedBox>
            <KeyBtn>H</KeyBtn>
            <KeyBtn>W</KeyBtn>
          </Footer>
        </BottomRow>
      </Frame>
    </>
  );
}
